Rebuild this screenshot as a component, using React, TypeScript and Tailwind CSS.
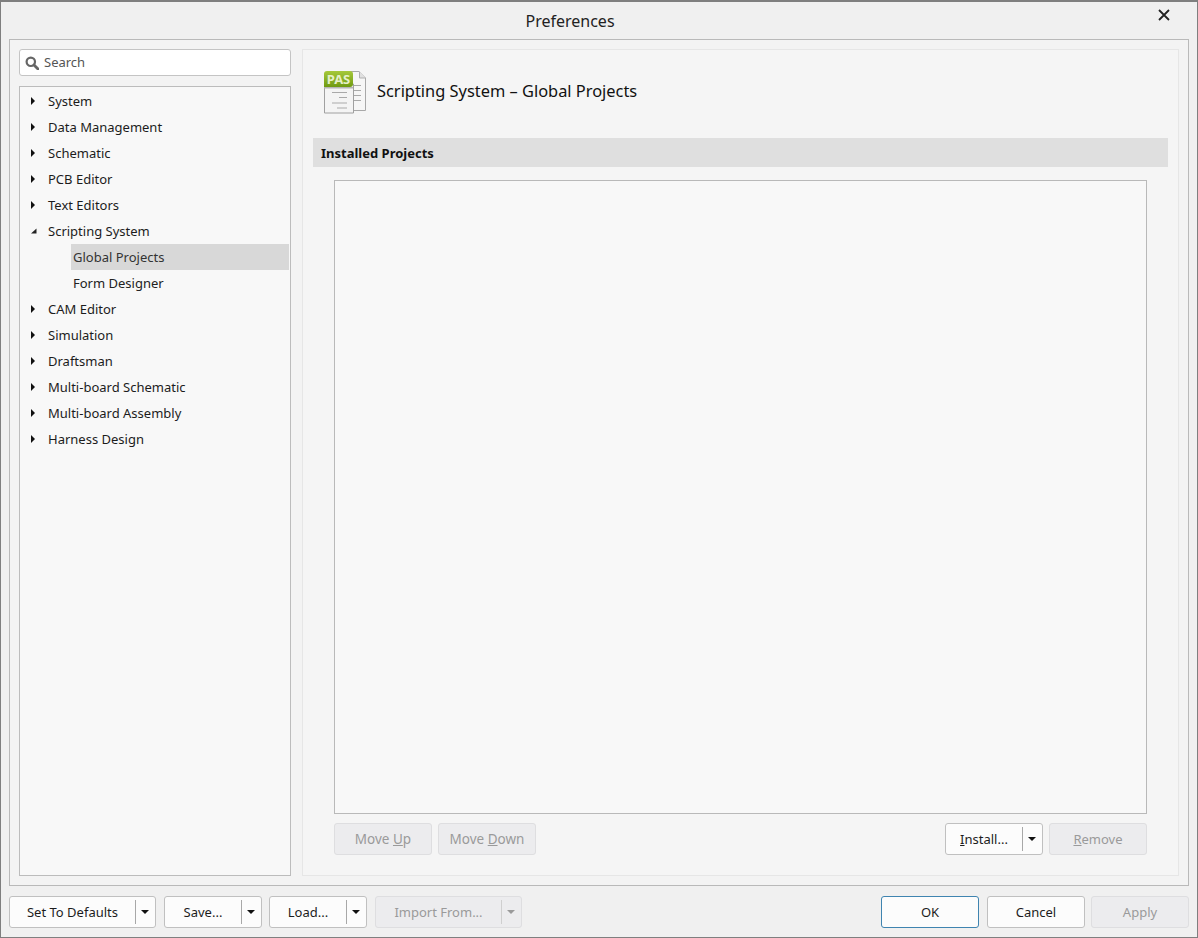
import React from "react";

const font = { fontFamily: '"Noto Sans", "Open Sans", sans-serif' };

function Caret({ color = "#111" }: { color?: string }) {
  return <span className="block w-0 h-0 border-l-[4px] border-r-[4px] border-t-[4px] border-l-transparent border-r-transparent" style={{ borderTopColor: color }} />;
}

function TreeRow({ label, open }: { label: string; open?: boolean }) {
  return (
    <div className="flex h-[26px] items-center">
      <span className="w-[28px] pl-[11px] flex items-center">
        {open ? (
          <svg width="6" height="6" viewBox="0 0 6 6"><path d="M0 5.5 L5.5 5.5 L5.5 0.5 Z" fill="#222" /></svg>
        ) : (
          <svg width="4" height="8" viewBox="0 0 4 8"><path d="M0 0 L4 4 L0 8 Z" fill="#111" /></svg>
        )}
      </span>
      <span className="text-[13px] text-[#1c1c1c] pt-[1px]">{label}</span>
    </div>
  );
}

function Btn({ label, w, disabled, primary, u, big }: { label: string; w: string; disabled?: boolean; primary?: boolean; u?: [string, string, string]; big?: boolean }) {
  const cls = disabled
    ? "bg-[#ececee] border-[#dedee0] text-[#9a9a9a]"
    : primary
      ? "bg-[#fcfcfc] border-[#3f84b0] text-[#1c1c1c]"
      : "bg-[#fcfcfc] border-[#c0c0c0] text-[#1c1c1c]";
  return (
    <div className={`${w} h-[32px] border rounded-[3px] flex items-center justify-center ${big ? "text-[13.5px]" : "text-[13px]"} ${cls}`}>
      <span className="pt-[1px]">
        {u ? (<>{u[0]}<span className="underline">{u[1]}</span>{u[2]}</>) : label}
      </span>
    </div>
  );
}

function SplitBtn({ children, w, disabled }: { children: React.ReactNode; w: string; disabled?: boolean }) {
  return (
    <div className={`${w} h-[32px] border rounded-[3px] flex items-center text-[13px] ${disabled ? "bg-[#ececee] border-[#dedee0] text-[#9a9a9a]" : "bg-[#fcfcfc] border-[#c0c0c0] text-[#1c1c1c]"}`}>
      <div className="flex-1 text-center pt-[1px]">{children}</div>
      <div className={`w-[20px] h-[24px] border-l ${disabled ? "border-[#cfcfcf]" : "border-[#a8a8a8]"} flex items-center justify-center pr-[1px]`}>
        <Caret color={disabled ? "#9a9a9a" : "#111"} />
      </div>
    </div>
  );
}

function PasIcon() {
  return (
    <svg width="44" height="44" viewBox="0 0 44 44">
      <defs>
        <linearGradient id="pg" x1="0" y1="0" x2="0" y2="1">
          <stop offset="0" stopColor="#a6c93a" />
          <stop offset="1" stopColor="#6f9a12" />
        </linearGradient>
      </defs>
      <path d="M26 1.5 H36 L42.5 8 V40.5 H26 Z" fill="#f6f6f6" stroke="#a8a8a8" />
      <path d="M36.5 1.5 V8 H42.5" fill="#e0e0e0" stroke="#b0b0b0" />
      <path d="M1.5 14 H30.5 V43 H1.5 Z" fill="#f4f4f4" stroke="#a0a0a0" />
      <g stroke="#a9a9a9" strokeWidth="1.2">
        <path d="M31 15.5 H38 M31 20.5 H38 M31 25.5 H38 M31 30.5 H38" />
        <path d="M9 22.5 H24 M16 27.5 H24 M9 33 H24 M14 38 H24" />
      </g>
      <path d="M1 17 H30 V18.5 H1 Z" fill="#b5b5b5" />
      <path d="M1 4 Q1 1 4 1 H27 Q30 1 30 4 V14 Q30 17 27 17 H1 Z" fill="url(#pg)" />
      <text x="15.5" y="13.5" textAnchor="middle" fontSize="13" fontWeight="700" fill="#e6f0c8" style={{ fontFamily: '"Noto Sans", sans-serif' }}>PAS</text>
    </svg>
  );
}

const before = ["System", "Data Management", "Schematic", "PCB Editor", "Text Editors"];
const after = ["CAM Editor", "Simulation", "Draftsman", "Multi-board Schematic", "Multi-board Assembly", "Harness Design"];

export default function App() {
  return (
    <div style={font} className="w-[1198px] h-[938px] bg-[#f0f0f0] border border-[#7f7f7f] border-t-2 flex flex-col overflow-hidden">
      <div className="h-[37px] flex items-center relative shrink-0">
        <div className="w-full text-center text-[16px] text-[#222] pr-[58px] pt-[1px]">Preferences</div>
        <svg className="absolute right-[27px] top-[7px]" width="12" height="12" viewBox="0 0 12 12"><path d="M1 1 L11 11 M11 1 L1 11" stroke="#222" strokeWidth="1.8" /></svg>
      </div>
      <div className="mx-[8px] h-[847px] shrink-0 border border-[#b9b9b9] bg-[#f3f3f3] p-[9px] flex gap-[11px]">
        <div className="w-[272px] shrink-0 flex flex-col gap-[10px]">
          <div className="h-[27px] bg-white border border-[#c4c4c4] rounded-[3px] flex items-center pl-[5px] gap-[5px] text-[13px] text-[#555]">
            <svg width="14" height="14" viewBox="0 0 14 14"><circle cx="5.8" cy="5.8" r="4.2" fill="none" stroke="#666" strokeWidth="2.2" /><path d="M9 9 L13 13" stroke="#666" strokeWidth="2.8" strokeLinecap="round" /></svg>
            <span>Search</span>
          </div>
          <div className="flex-1 bg-[#f8f8f8] border border-[#bcbcbc] pt-[1px]">
            {before.map((l) => <TreeRow key={l} label={l} />)}
            <TreeRow label="Scripting System" open />
            <div className="ml-[51px] mr-[1px] h-[26px] bg-[#d8d8d8] flex items-center pl-[2px] pt-[1px] text-[13px] text-[#333]">Global Projects</div>
            <div className="ml-[51px] h-[26px] flex items-center pl-[2px] pt-[1px] text-[13px] text-[#222]">Form Designer</div>
            {after.map((l) => <TreeRow key={l} label={l} />)}
          </div>
        </div>
        <div className="flex-1 border border-[#e6e6e6] bg-[#f5f5f5] px-[10px] flex flex-col">
          <div className="h-[88px] shrink-0 flex items-center pl-[10px] gap-[10px] pb-[5px]">
            <PasIcon />
            <span className="text-[16.4px] text-[#111]">Scripting System – Global Projects</span>
          </div>
          <div className="h-[29px] shrink-0 bg-[#dfdfdf] flex items-center pl-[8px] pt-[2px] text-[13px] font-bold text-[#111]">Installed Projects</div>
          <div className="flex-1 px-[21px] pt-[13px] pb-[20px] flex flex-col">
            <div className="flex-1 bg-[#f8f8f8] border border-[#b9b9b9]" />
            <div className="h-[32px] mt-[9px] shrink-0 flex items-center">
              <div className="flex gap-[6px]">
                <Btn label="Move Up" w="w-[98px]" disabled big u={["Move ", "U", "p"]} />
                <Btn label="Move Down" w="w-[98px]" disabled big u={["Move ", "D", "own"]} />
              </div>
              <div className="ml-auto flex gap-[6px]">
                <SplitBtn w="w-[98px]"><span className="underline">I</span>nstall...</SplitBtn>
                <Btn label="Remove" w="w-[98px]" disabled u={["", "R", "emove"]} />
              </div>
            </div>
          </div>
        </div>
      </div>
      <div className="mx-[8px] mt-[10px] flex items-center">
        <div className="flex">
          <SplitBtn w="w-[147px]">Set To Defaults</SplitBtn>
          <div className="ml-[8px]"><SplitBtn w="w-[98px]">Save...</SplitBtn></div>
          <div className="ml-[7px]"><SplitBtn w="w-[98px]">Load...</SplitBtn></div>
          <div className="ml-[8px]"><SplitBtn w="w-[147px]" disabled>Import From...</SplitBtn></div>
        </div>
        <div className="ml-auto flex">
          <Btn label="OK" w="w-[98px]" primary />
          <div className="ml-[8px]"><Btn label="Cancel" w="w-[98px]" /></div>
          <div className="ml-[6px]"><Btn label="Apply" w="w-[98px]" disabled /></div>
        </div>
      </div>
    </div>
  );
}
